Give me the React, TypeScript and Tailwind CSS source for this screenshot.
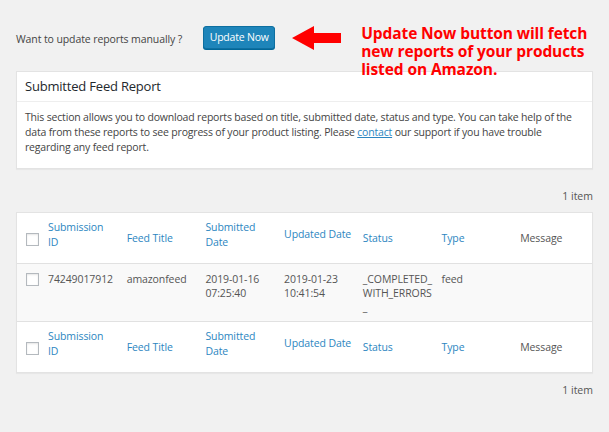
import React from 'react';

const cols = ['Submission ID', 'Feed Title', 'Submitted Date', 'Updated Date', 'Status', 'Type', 'Message'];

const Check = () => (
  <span className="block w-[13px] h-[13px] border border-[#b4b9be] bg-white shadow-[inset_0_1px_2px_rgba(0,0,0,0.1)]" />
);

const headPad: Record<string, string> = {
  'Submission ID': 'pt-[7px]',
  'Feed Title': 'pt-[18px]',
  'Submitted Date': 'pt-[7px]',
  'Updated Date': 'pt-[14px]',
  Status: 'pt-[18px]',
  Type: 'pt-[18px]',
  Message: 'pt-[18px]',
};

const HeadRow = ({ top }: { top?: boolean }) => (
  <tr className={top ? 'border-b border-[#e1e1e1]' : 'border-t border-[#e1e1e1]'}>
    <td className="w-[24px] pl-[9px] pt-[20px] align-top">
      <Check />
    </td>
    {cols.map((c, i) => (
      <th
        key={c}
        className={`pl-[7px] pr-0 pb-[13px] ${headPad[c]} text-left font-normal align-top leading-[15px] ${
          i === 6 ? 'text-[#555]' : 'text-[#2c86c1]'
        }`}
      >
        {c === 'Submission ID' ? (
          <>
            Submission
            <br />
            ID
          </>
        ) : c === 'Submitted Date' ? (
          <>
            Submitted
            <br />
            Date
          </>
        ) : (
          c
        )}
      </th>
    ))}
  </tr>
);

export default function App() {
  return (
    <div className="w-[609px] h-[432px] bg-[#f1f1f1] px-4 pt-[26px] text-[#444] font-['Open_Sans',sans-serif] overflow-hidden">
      <div className="flex items-start h-[45px]">
        <div className="flex items-center h-[23px] shrink-0 whitespace-nowrap">
          <span className="text-[10.5px] tracking-[-0.1px] text-[#444] mt-[5px]">Want to update reports manually ?</span>
          <button className="ml-[21px] w-[72px] h-[23px] rounded-[3px] bg-[#1e85ba] border border-[#0e6fa0] text-white text-[10.5px] tracking-[-0.2px] shadow-[0_1px_0_#006799]">
            Update Now
          </button>
          <svg width="49" height="24" viewBox="0 0 49 24" className="ml-[17px]">
            <polygon points="0,12 22,0 22,7 49,7 49,17 22,17 22,24" fill="#ff0000" />
          </svg>
        </div>
        <div className="ml-[20px] mt-[-2px] text-[#ff0000] font-bold text-[15.5px] leading-[18px] tracking-[-0.1px] whitespace-nowrap relative z-10">
          Update Now button will fetch
          <br />
          new reports of your products
          <br />
          listed on Amazon.
        </div>
      </div>

      <div className="bg-white border border-[#e3e3e3] shadow-[0_1px_1px_rgba(0,0,0,0.04)]">
        <div className="h-[30px] flex items-center px-[8px] border-b border-[#eee] text-[13px] text-[#23282d] tracking-[-0.2px]">
          Submitted Feed Report
        </div>
        <p className="px-[8px] pt-[8px] pb-[13px] text-[10.5px] leading-[15px] tracking-[-0.18px] text-[#444]">
          This section allows you to download reports based on title, submitted date, status and type. You can take help of the
          data from these reports to see progress of your product listing. Please{' '}
          <a className="underline text-[#2c86c1]">contact</a> our support if you have trouble
          <br />
          regarding any feed report.
        </p>
      </div>

      <div className="text-right text-[10.5px] text-[#555] mt-[20px] h-[23px] leading-[15px]">1 item</div>

      <div className="bg-white border border-[#e3e3e3] shadow-[0_1px_1px_rgba(0,0,0,0.04)]">
        <table className="w-full table-fixed border-collapse text-[10.5px] tracking-[-0.1px]">
          <colgroup>
            <col className="w-[24px]" />
            {cols.map((c) => (
              <col key={c} />
            ))}
          </colgroup>
          <thead>
            <HeadRow top />
          </thead>
          <tbody>
            <tr className="bg-[#f9f9f9] text-[#555] leading-[14px] align-top">
              <td className="pl-[9px] pt-[9px] pb-[7px]">
                <Check />
              </td>
              <td className="pl-[7px] pt-[8px] pb-[7px]">74249017912</td>
              <td className="pl-[7px] pt-[8px] pb-[7px]">amazonfeed</td>
              <td className="pl-[7px] pt-[8px] pb-[7px]">
                2019-01-16
                <br />
                07:25:40
              </td>
              <td className="pl-[7px] pt-[8px] pb-[7px]">
                2019-01-23
                <br />
                10:41:54
              </td>
              <td className="pl-[7px] pt-[8px] pb-[7px]">
                _COMPLETED_
                <br />
                WITH_ERRORS
                <br />_
              </td>
              <td className="pl-[7px] pt-[8px] pb-[7px]">feed</td>
              <td className="pl-[7px] pt-[8px] pb-[7px]"></td>
            </tr>
          </tbody>
          <tfoot>
            <HeadRow />
          </tfoot>
        </table>
      </div>

      <div className="text-right text-[10.5px] text-[#555] mt-[10px] leading-[15px]">1 item</div>
    </div>
  );
}
